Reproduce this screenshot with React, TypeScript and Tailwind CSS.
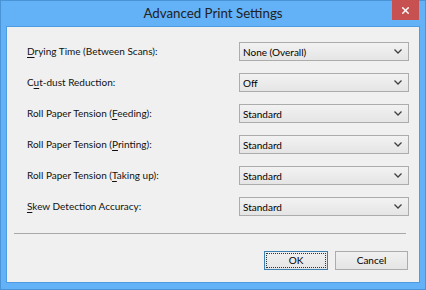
import { X } from 'lucide-react'

const rows = [
  { pre: '', key: 'D', post: 'rying Time (Between Scans):', value: 'None (Overall)' },
  { pre: 'C', key: 'u', post: 't-dust Reduction:', value: 'Off' },
  { pre: 'Roll Paper Tension (', key: 'F', post: 'eeding):', value: 'Standard' },
  { pre: 'Roll Paper Tension (', key: 'P', post: 'rinting):', value: 'Standard' },
  { pre: 'Roll Paper Tension (', key: 'T', post: 'aking up):', value: 'Standard' },
  { pre: '', key: 'S', post: 'kew Detection Accuracy:', value: 'Standard' },
]

function Combo({ value }: { value: string }) {
  return (
    <div className="flex h-[19px] w-[170px] items-center justify-between border border-[#acacac] bg-gradient-to-b from-[#f2f2f2] to-[#e5e5e5] pl-[3px] pr-[6px] text-black">
      <span className="leading-none">{value}</span>
      <svg width="8" height="5" viewBox="0 0 8 5" className="text-[#404040]">
        <path d="M0.5 0.5 L4 4 L7.5 0.5" fill="none" stroke="currentColor" strokeWidth="1.3" />
      </svg>
    </div>
  )
}

export default function App() {
  return (
    <div
      className="flex h-[290px] w-[426px] flex-col border border-[#4a94d6] bg-[#63b1f6] text-[10px]"
      style={{ fontFamily: 'Lato, "Noto Sans", sans-serif' }}
    >
      <div className="relative flex h-[25px] shrink-0 items-center justify-center">
        <span className="text-[13.3px] text-[#222]">Advanced Print Settings</span>
        <div className="absolute right-[6px] top-[-1px] flex h-[20px] w-[27px] items-center justify-center bg-[#c75050]">
          <X size={11} strokeWidth={3} className="text-white" />
        </div>
      </div>
      <div className="mx-[5px] mb-[6px] flex flex-1 flex-col border border-[#4f9be0] bg-[#f0f0f0]">
        <div className="flex flex-col gap-[12px] pl-[20px] pr-[10px] pt-[15px]">
          {rows.map((r) => (
            <div key={r.post} className="flex items-center justify-between">
              <span className="text-[#111]">
                {r.pre}
                <span className="underline underline-offset-2">{r.key}</span>
                {r.post}
              </span>
              <Combo value={r.value} />
            </div>
          ))}
        </div>
        <div className="ml-[7px] mr-[13px] mt-[17px] h-[1px] bg-[#a8a8a8]" />
        <div className="mr-[11px] mt-[17px] flex justify-end gap-[7px]">
          <div className="flex h-[19px] w-[64px] items-center justify-center border border-[#3c7fb1] bg-gradient-to-b from-[#f0f0f0] to-[#e5e5e5] p-[1px]">
            <div className="flex h-full w-full items-center justify-center border border-dotted border-[#333]">
              OK
            </div>
          </div>
          <div className="flex h-[19px] w-[73px] items-center justify-center border border-[#acacac] bg-gradient-to-b from-[#f0f0f0] to-[#e5e5e5]">
            Cancel
          </div>
        </div>
      </div>
    </div>
  )
}
